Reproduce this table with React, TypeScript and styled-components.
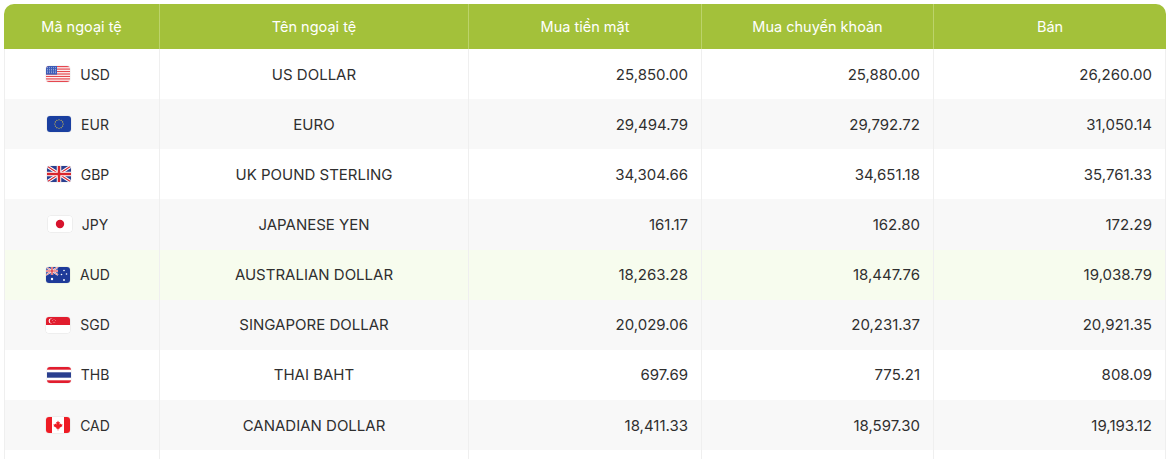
import React from "react";
import styled, { createGlobalStyle } from "styled-components";

const Global = createGlobalStyle`
  html, body { margin: 0; padding: 0; background: #fff; }
  body { font-family: Inter, "Noto Sans", sans-serif; }
`;

const Wrap = styled.div`
  padding: 4px 4px 0 4px;
`;

const Table = styled.table`
  width: 1162px;
  border-collapse: separate;
  border-spacing: 0;
  table-layout: fixed;
  font-size: 15px;
  color: #2f2f2f;
`;

const Th = styled.th`
  background: #a3c13a;
  color: #fff;
  font-weight: 400;
  font-size: 14.5px;
  height: 45px;
  padding: 0 8px;
  text-align: center;
  border-right: 1px solid #bcd36a;
  &:first-child { border-top-left-radius: 10px; }
  &:last-child { border-top-right-radius: 10px; border-right: none; }
`;

const Tr = styled.tr<{ $bg: string }>`
  background: ${(p) => p.$bg};
`;

const Td = styled.td<{ $align?: string }>`
  height: 50.15px;
  padding: 0 13px;
  text-align: ${(p) => p.$align || "center"};
  border-right: 1px solid #efefef;
  &:first-child { border-left: 1px solid #efefef; }
  &:last-child { border-right: 1px solid #efefef; }
`;

const Code = styled.div`
  display: flex;
  align-items: center;
  justify-content: center;
  gap: 10px;
  padding-right: 8px;
  font-size: 14px;
`;

const FlagBox = styled.span`
  display: inline-flex;
  width: 24px;
  height: 16px;
  border-radius: 3px;
  overflow: hidden;
  box-shadow: 0 0 0 0.5px rgba(0,0,0,0.08);
  svg { width: 24px; height: 16px; display: block; }
`;

const Flag: React.FC<{ c: string }> = ({ c }) => {
  let inner: React.ReactNode = null;
  switch (c) {
    case "USD":
      inner = (
        <>
          <rect width="24" height="16" fill="#fff" />
          {Array.from({ length: 7 }).map((_, i) => (
            <rect key={"r" + i} x="0" y={(i * 2 * 16) / 13} width="24" height={16 / 13} fill="#e5474f" />
          ))}
          <rect width="11" height="8.6" fill="#3c5cb8" />
          {[1.5, 3.5, 5.5, 7.5, 9.5].map((x) =>
            [1.4, 3.2, 5, 6.8].map((y) => <circle key={x + "-" + y} cx={x} cy={y} r="0.45" fill="#fff" />)
          )}
        </>
      );
      break;
    case "EUR":
      inner = (
        <>
          <rect width="24" height="16" fill="#1a3fa0" />
          {Array.from({ length: 12 }).map((_, i) => {
            const a = (i * Math.PI * 2) / 12;
            return <circle key={i} cx={12 + 4.2 * Math.cos(a)} cy={8 + 4.2 * Math.sin(a)} r="0.55" fill="#f5d13a" />;
          })}
        </>
      );
      break;
    case "GBP":
      inner = (
        <>
          <rect width="24" height="16" fill="#2a3f8f" />
          <path d="M0 0 L24 16 M24 0 L0 16" stroke="#fff" strokeWidth="3.2" />
          <path d="M0 0 L24 16 M24 0 L0 16" stroke="#d9262e" strokeWidth="1.1" />
          <path d="M12 0 V16 M0 8 H24" stroke="#fff" strokeWidth="4.5" />
          <path d="M12 0 V16 M0 8 H24" stroke="#d9262e" strokeWidth="2.5" />
        </>
      );
      break;
    case "JPY":
      inner = (
        <>
          <rect width="24" height="16" fill="#fff" />
          <circle cx="12" cy="8" r="4.2" fill="#d7142d" />
        </>
      );
      break;
    case "AUD":
      inner = (
        <>
          <rect width="24" height="16" fill="#1e3a99" />
          <g>
            <path d="M0 0 L12 8 M12 0 L0 8" stroke="#fff" strokeWidth="1.8" />
            <path d="M0 0 L12 8 M12 0 L0 8" stroke="#d9262e" strokeWidth="0.6" />
            <path d="M6 0 V8 M0 4 H12" stroke="#fff" strokeWidth="2.4" />
            <path d="M6 0 V8 M0 4 H12" stroke="#d9262e" strokeWidth="1.2" />
          </g>
          <circle cx="6" cy="12" r="1.2" fill="#fff" />
          <circle cx="18" cy="3.5" r="0.8" fill="#fff" />
          <circle cx="15.5" cy="7.5" r="0.8" fill="#fff" />
          <circle cx="20.5" cy="7" r="0.8" fill="#fff" />
          <circle cx="18" cy="13" r="0.9" fill="#fff" />
        </>
      );
      break;
    case "SGD":
      inner = (
        <>
          <rect width="24" height="16" fill="#fff" />
          <rect width="24" height="8" fill="#e11d2e" />
          <circle cx="5" cy="4" r="2.4" fill="#fff" />
          <circle cx="6" cy="4" r="2.3" fill="#e11d2e" />
          <circle cx="8" cy="2.6" r="0.4" fill="#fff" />
          <circle cx="9.3" cy="3.6" r="0.4" fill="#fff" />
          <circle cx="8.8" cy="5.2" r="0.4" fill="#fff" />
          <circle cx="7.2" cy="5.2" r="0.4" fill="#fff" />
          <circle cx="6.7" cy="3.6" r="0.4" fill="#fff" />
        </>
      );
      break;
    case "THB":
      inner = (
        <>
          <rect width="24" height="16" fill="#e11d2e" />
          <rect y="2.7" width="24" height="10.6" fill="#fff" />
          <rect y="5.3" width="24" height="5.4" fill="#2a3f8f" />
        </>
      );
      break;
    case "CAD":
      inner = (
        <>
          <rect width="24" height="16" fill="#fff" />
          <rect width="6" height="16" fill="#ee1c25" />
          <rect x="18" width="6" height="16" fill="#ee1c25" />
          <path
            d="M12 3.6 L12.8 5.3 L13.9 4.9 L13.4 7.6 L14.9 6.4 L15.3 7.4 L16.6 7.2 L16 8.7 L16.6 9 L13.3 11 L13.6 12 L12.3 11.8 L12.3 13.4 L11.7 13.4 L11.7 11.8 L10.4 12 L10.7 11 L7.4 9 L8 8.7 L7.4 7.2 L8.7 7.4 L9.1 6.4 L10.6 7.6 L10.1 4.9 L11.2 5.3 Z"
            fill="#ee1c25"
          />
        </>
      );
      break;
  }
  return (
    <FlagBox>
      <svg viewBox="0 0 24 16" preserveAspectRatio="none">{inner}</svg>
    </FlagBox>
  );
};

type Row = { code: string; name: string; cash: string; transfer: string; sell: string };

const rows: Row[] = [
  { code: "USD", name: "US DOLLAR", cash: "25,850.00", transfer: "25,880.00", sell: "26,260.00" },
  { code: "EUR", name: "EURO", cash: "29,494.79", transfer: "29,792.72", sell: "31,050.14" },
  { code: "GBP", name: "UK POUND STERLING", cash: "34,304.66", transfer: "34,651.18", sell: "35,761.33" },
  { code: "JPY", name: "JAPANESE YEN", cash: "161.17", transfer: "162.80", sell: "172.29" },
  { code: "AUD", name: "AUSTRALIAN DOLLAR", cash: "18,263.28", transfer: "18,447.76", sell: "19,038.79" },
  { code: "SGD", name: "SINGAPORE DOLLAR", cash: "20,029.06", transfer: "20,231.37", sell: "20,921.35" },
  { code: "THB", name: "THAI BAHT", cash: "697.69", transfer: "775.21", sell: "808.09" },
  { code: "CAD", name: "CANADIAN DOLLAR", cash: "18,411.33", transfer: "18,597.30", sell: "19,193.12" },
];

const rowBg = (i: number) => (i === 4 ? "#f7fcee" : i % 2 === 1 ? "#f8f8f8" : "#ffffff");

export default function App() {
  return (
    <Wrap>
      <Global />
      <Table>
        <colgroup>
          <col style={{ width: 156 }} />
          <col style={{ width: 309 }} />
          <col style={{ width: 233 }} />
          <col style={{ width: 232 }} />
          <col style={{ width: 232 }} />
        </colgroup>
        <thead>
          <tr>
            <Th>Mã ngoại tệ</Th>
            <Th>Tên ngoại tệ</Th>
            <Th>Mua tiền mặt</Th>
            <Th>Mua chuyển khoản</Th>
            <Th>Bán</Th>
          </tr>
        </thead>
        <tbody>
          {rows.map((r, i) => (
            <Tr key={r.code} $bg={rowBg(i)}>
              <Td>
                <Code>
                  <Flag c={r.code} />
                  <span>{r.code}</span>
                </Code>
              </Td>
              <Td>{r.name}</Td>
              <Td $align="right">{r.cash}</Td>
              <Td $align="right">{r.transfer}</Td>
              <Td $align="right">{r.sell}</Td>
            </Tr>
          ))}
          <Tr $bg="#ffffff">
            <Td />
            <Td />
            <Td />
            <Td />
            <Td />
          </Tr>
        </tbody>
      </Table>
    </Wrap>
  );
}
